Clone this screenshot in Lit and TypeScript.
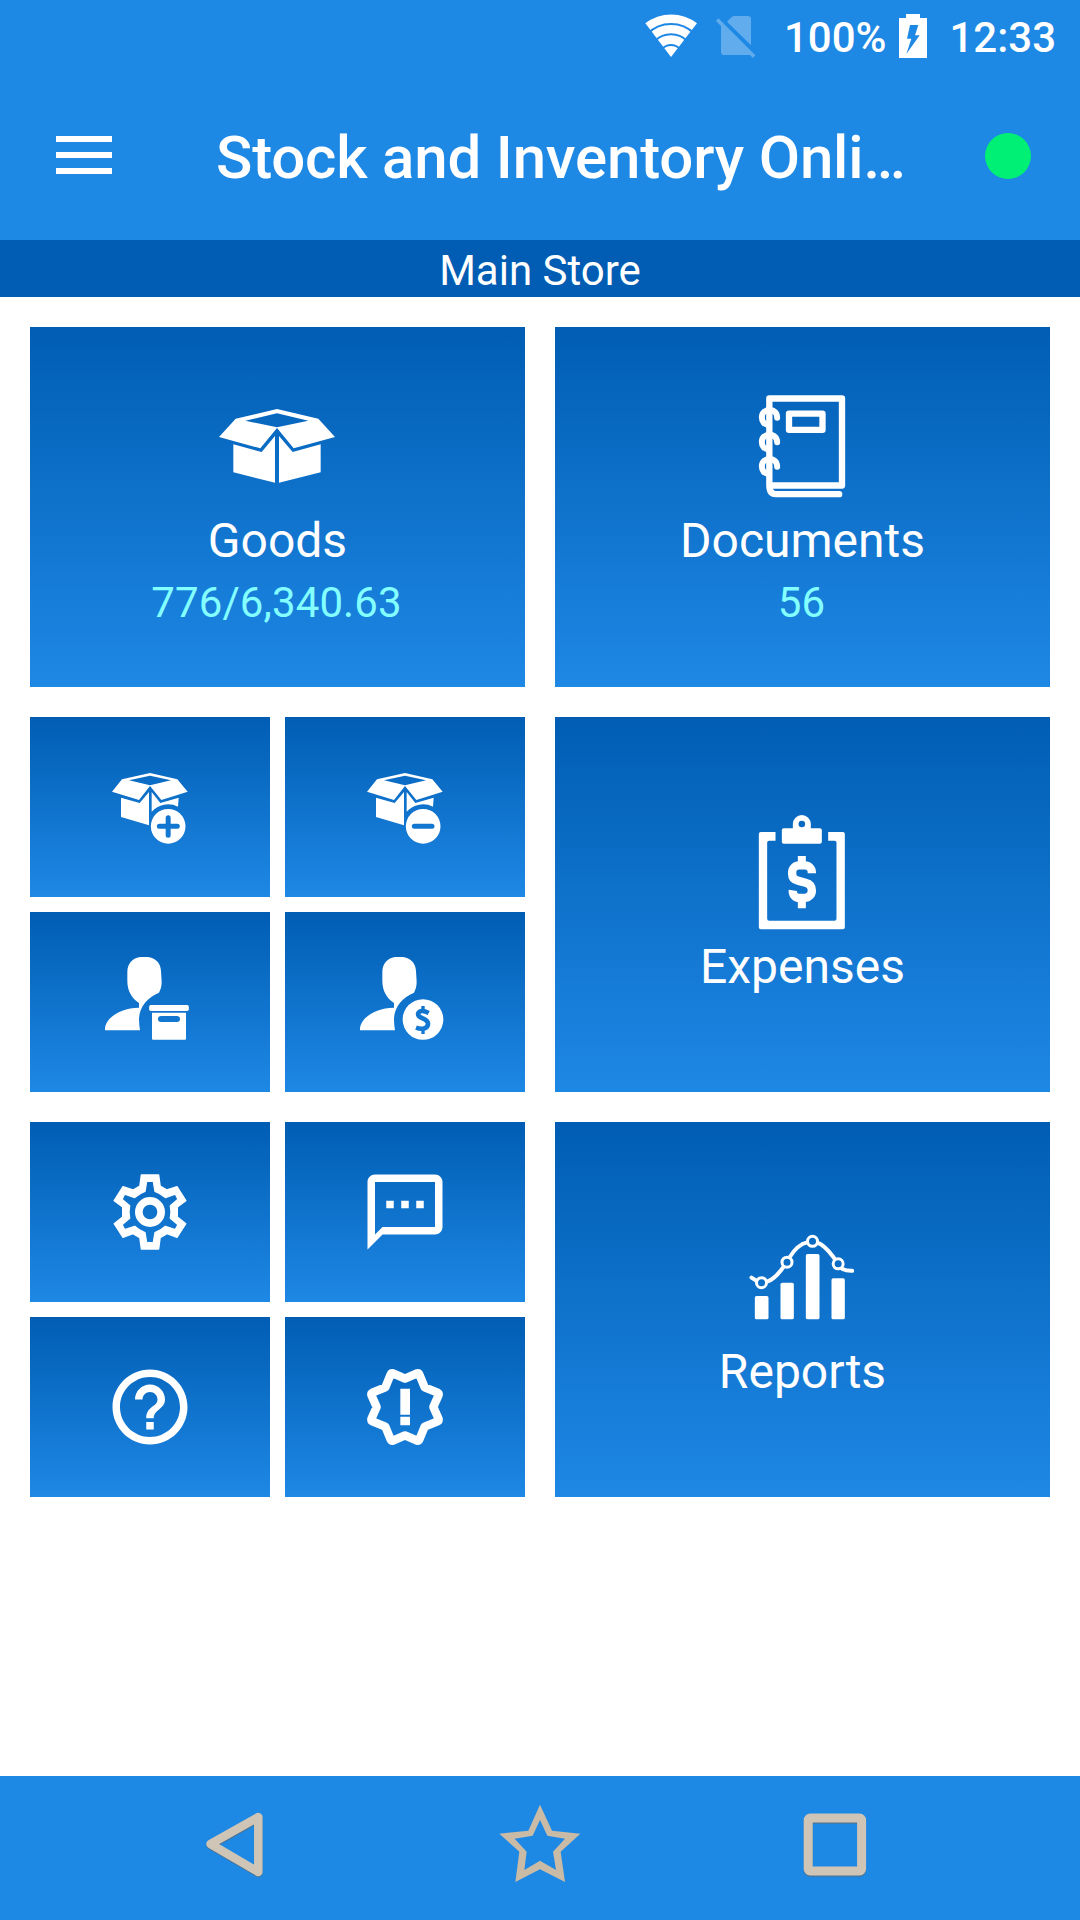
import { LitElement, html, svg, css } from "lit";
import { customElement, property } from "lit/decorators.js";

type Icon = { box: string; art: unknown };

const boxSmall = svg`
  <path fill-rule="evenodd" d="M306 208L390 189L472 208L503 245L424 270L390 228L357 270L276 245ZM327 211L390 226L453 211L390 197Z"/>
  <path d="M303 263L359 279L387 246V346L303 321Z"/>
  <path d="M395 246L421 279L476 263L474 290A67 67 0 0 0 395 305Z"/>`;

const person = svg`
  <path d="M372 170C405 170 422 188 423 213L425 245C425 260 421 270 417 278C382 292 357 322 357 358Q357 375 360 391H255C253 356 298 324 357 323V309C335 295 322 272 322 243V215C323 188 340 170 372 170Z"/>`;

const ICONS: Record<string, Icon> = {
  goods: {
    box: "264 21 360 360",
    art: svg`
      <path fill-rule="evenodd" d="M317 116L441 87L565 116L615 171L491 205L441 144L391 205L267 171ZM346 122L441 142L535 122L441 100Z"/>
      <path d="M310 193L395 216L435 168V308L310 277ZM447 168L488 216L572 193V277L447 308Z"/>`,
  },
  documents: {
    box: "249.5 50 360 360",
    art: svg`
      <g fill="none" stroke="#fff" stroke-width="19" stroke-linejoin="round" stroke-linecap="round">
        <path d="M328.5 345.5H546.5V84.5H328.5V345Q329 371.5 347 371.5H538"/>
        <path d="M387.5 130H488V178.5H387.5Z"/>
        <path stroke-width="18" d="M352 142C352 128 343 119 329 119C315 119 306 128 306 141C306 154 314 163 326 163"/>
        <path stroke-width="18" d="M352 216C352 202 343 193 329 193C315 193 306 202 306 215C306 228 314 237 326 237"/>
        <path stroke-width="18" d="M352 289C352 275 343 266 329 266C315 266 306 275 306 288C306 301 314 310 326 310"/>
      </g>`,
  },
  expenses: {
    box: "189.5 68 360 360",
    art: svg`
      <path d="M287 125H243q-6 0-6 6V411q0 6 6 6H489q6 0 6-6V131q0-6-6-6H445V151H464q6 0 6 6V385q0 6-6 6H268q-6 0-6-6V157q0-6 6-6H287Z"/>
      <rect x="306" y="114" width="120" height="46" rx="6"/>
      <path fill-rule="evenodd" d="M339 118V101a27 27 0 0 1 54 0V118ZM356 101a10 10 0 0 0 20 0a10 10 0 0 0-20 0Z"/>
      <path d="M354 197H378V218H354ZM354 330H378V354H354Z"/>
      <path fill="none" stroke="#fff" stroke-width="25" d="M396 249V246A21 21 0 0 0 375 225H358A21 21 0 0 0 337 246V252C337 263 344 269 354 271L377 277C389 280 396 288 396 300A22 22 0 0 1 374 323H359A20 20 0 0 1 339 300"/>`,
  },
  reports: {
    box: "189.5 24 360 360",
    art: svg`
      <rect x="225" y="258" width="41" height="70" rx="5"/>
      <rect x="302" y="218" width="40" height="110" rx="5"/>
      <rect x="378" y="132" width="41" height="196" rx="5"/>
      <rect x="455" y="205" width="40" height="123" rx="5"/>
      <g fill="none" stroke="#fff" stroke-width="9">
        <circle cx="245" cy="218" r="15"/><circle cx="321.5" cy="156.5" r="15"/>
        <circle cx="398" cy="94" r="15"/><circle cx="475" cy="161.5" r="15"/>
      </g>
      <g fill="none" stroke="#fff" stroke-width="12">
        <path stroke-linecap="round" d="M215 203L229 212M488 177Q499 183 517 182.5"/>
        <path d="M262 215C286 207 298 187 311 171M330 141C344 118 360 102 382 97M413 98C438 108 450 128 465 147"/>
      </g>`,
  },
  boxPlus: {
    box: "255 156 270 270",
    art: svg`${boxSmall}
      <path fill-rule="evenodd" d="M392.5 349a52 52 0 1 0 104 0a52 52 0 1 0-104 0ZM437 323a7.5 7.5 0 0 1 15 0V341.5H472a7.5 7.5 0 0 1 0 15H452V376a7.5 7.5 0 0 1-15 0V356.5H418a7.5 7.5 0 0 1 0-15H437Z"/>`,
  },
  boxMinus: {
    box: "255 156 270 270",
    art: svg`${boxSmall}
      <path fill-rule="evenodd" d="M392.5 349a52 52 0 1 0 104 0a52 52 0 1 0-104 0ZM418 341.5H471a7.5 7.5 0 0 1 0 15H418a7.5 7.5 0 0 1 0-15Z"/>`,
  },
  supplier: {
    box: "255 171 270 270",
    art: svg`${person}
      <rect x="387.5" y="315" width="119" height="18" rx="5"/>
      <path fill-rule="evenodd" d="M396 338H498V416q0 3-3 3H399q-3 0-3-3ZM423 348a9 9 0 0 0 0 18H471a9 9 0 0 0 0-18Z"/>`,
  },
  customer: {
    box: "255 171 270 270",
    art: svg`${person}
      <mask id="coin" maskUnits="userSpaceOnUse" x="370" y="285" width="150" height="150">
        <circle cx="444" cy="358.5" r="61" fill="#fff"/>
        <g fill="none" stroke="#000">
          <path stroke-width="14" d="M461 339Q448 332 440 333C429 335 427 343 432 349C438 356 459 358 459 371C459 387 440 389 423 383"/>
          <path stroke-width="10" d="M444 318V332M444 386V402"/>
        </g>
      </mask>
      <rect x="370" y="285" width="150" height="150" mask="url(#coin)"/>`,
  },
  settings: {
    box: "255 171 270 270",
    art: svg`
      <path fill-rule="evenodd" stroke="#fff" stroke-width="4" stroke-linejoin="round" d="M364 195H416L420.5 228L441 240L471 230L497.5 272L472 291V321L497.5 341L471 382L441 371L420.5 383L416 417H364L359.5 383L339 371L309 382L282.5 341L308 321V291L282.5 272L309 230L339 240L359.5 228ZM380 214L375 244Q358 250 344 262.5L314 252L306 268L329 287Q325 306 329 325L306 344L314 359L344 349Q358 362 375 368L380 398H400L405 368Q422 362 436 349L466 359L474 344L451 325Q455 306 451 287L474 268L466 252L436 262.5Q422 250 405 244L400 214Z"/>
      <circle cx="390" cy="306" r="33.5" fill="none" stroke="#fff" stroke-width="23"/>`,
  },
  messages: {
    box: "0 0 24 24",
    art: svg`<path fill-rule="evenodd" d="M20 2H4c-1.1 0-2 .9-2 2v18l4-4h14c1.1 0 2-.9 2-2V4c0-1.1-.9-2-2-2zm0 14H6l-2 2V4h16v12zM7 9h2v2H7zm4 0h2v2h-2zm4 0h2v2h-2z"/>`,
  },
  help: {
    box: "0 0 24 24",
    art: svg`<path d="M11 18h2v-2h-2v2zm1-16C6.48 2 2 6.48 2 12s4.48 10 10 10 10-4.48 10-10S17.52 2 12 2zm0 18c-4.41 0-8-3.59-8-8s3.59-8 8-8 8 3.59 8 8-3.59 8-8 8zm0-14c-2.21 0-4 1.79-4 4h2c0-1.1.9-2 2-2s2 .9 2 2c0 2-3 1.75-3 5h2c0-2.25 3-2.5 3-5 0-2.21-1.79-4-4-4z"/>`,
  },
  about: {
    box: "1020 156 270 270",
    art: svg`
      <path fill="none" stroke="#fff" stroke-width="25" stroke-linejoin="round" d="M1112 193Q1114 189 1119 190L1155 206L1191 190Q1196 189 1198 193L1214 232L1253 248Q1257 250 1256 255L1240 291L1256 327Q1257 332 1253 334L1214 350L1198 389Q1196 393 1191 392L1155 376L1119 392Q1114 393 1112 389L1096 350L1057 334Q1053 332 1054 327L1070 291L1054 255Q1053 250 1057 248L1096 232Z"/>
      <path d="M1141 236H1170V314.5H1141ZM1141 320H1170V346H1141Z"/>`,
  },
};

@customElement("dash-tile")
class DashTile extends LitElement {
  @property() icon = "";
  @property() label = "";
  @property() value = "";

  static styles = css`
    :host {
      display: flex;
      flex-direction: column;
      align-items: center;
      justify-content: center;
      background: linear-gradient(#005db3, #1e88e5);
      color: #fff;
    }
    .icon {
      display: block;
      width: 90px;
      height: 90px;
      fill: #fff;
    }
    .icon.large {
      width: 120px;
      height: 120px;
    }
    .label {
      margin-top: 4px;
      font-size: 48px;
      line-height: 60px;
    }
    .value {
      margin-top: 6px;
      padding-right: 2px;
      font-size: 42px;
      letter-spacing: 0.12px;
      line-height: 51px;
      color: #84ffff;
    }
  `;

  render() {
    const icon = ICONS[this.icon];
    return html`
      <svg class=${this.label ? "icon large" : "icon"} viewBox=${icon.box}>${icon.art}</svg>
      ${this.label ? html`<div class="label">${this.label}</div>` : null}
      ${this.value ? html`<div class="value">${this.value}</div>` : null}
    `;
  }
}

@customElement("app-root")
class AppRoot extends LitElement {
  static styles = css`
    :host {
      display: flex;
      flex-direction: column;
      height: 1920px;
      background: #fff;
      color: #fff;
      font-family: Roboto, sans-serif;
    }
    .status {
      display: flex;
      align-items: center;
      justify-content: flex-end;
      box-sizing: border-box;
      height: 72px;
      padding-right: 24px;
      background: #1e88e5;
      font-size: 42px;
      font-weight: 500;
      line-height: 72px;
    }
    .text { padding-top: 4px; }
    .wifi { width: 52px; height: 44px; margin-right: 19px; }
    .sim { width: 40px; height: 44px; margin-right: 28px; }
    .battery { width: 28px; height: 44px; margin: 0 22px 0 13px; }
    .bar {
      display: flex;
      align-items: center;
      box-sizing: border-box;
      height: 168px;
      padding: 0 49px 0 56px;
      background: #1e88e5;
    }
    .menu {
      display: flex;
      flex-direction: column;
      gap: 10px;
      margin-bottom: 2px;
    }
    .line { width: 56px; height: 6px; background: #fff; }
    .title {
      flex: 1;
      margin: 0 0 0 104px;
      padding-top: 4px;
      font-size: 60px;
      font-weight: 500;
      letter-spacing: -0.18px;
      line-height: 72px;
      white-space: nowrap;
    }
    .online {
      width: 46px;
      height: 46px;
      border-radius: 50%;
      background: #00f076;
    }
    .store {
      height: 57px;
      background: #005db3;
      font-size: 42px;
      line-height: 62px;
      text-align: center;
    }
    .grid {
      display: grid;
      grid-template-columns: 495px 495px;
      grid-template-rows: 360px 375px 375px;
      gap: 30px;
      padding: 30px;
    }
    .quad {
      display: grid;
      grid-template-columns: 1fr 1fr;
      grid-template-rows: 1fr 1fr;
      gap: 15px;
    }
    .nav {
      display: flex;
      align-items: center;
      justify-content: space-between;
      box-sizing: border-box;
      height: 144px;
      margin-top: auto;
      padding: 0 205px 8px;
      background: #1e88e5;
    }
    .key { width: 82px; height: 82px; }
  `;

  render() {
    return html`
      <div class="status">
        <svg class="wifi" viewBox="79 42 156 132">
          <path fill="#fff" d="M157 171L80 70A127 127 0 0 1 235 70Z"/>
          <g fill="none" stroke="#1e88e5" stroke-width="6">
            <circle cx="157" cy="171" r="99"/><circle cx="157" cy="171" r="68"/><circle cx="157" cy="171" r="36"/>
          </g>
        </svg>
        <svg class="sim" viewBox="292 42 120 132">
          <path fill="#fff" fill-opacity=".3" d="M325 65L338 52Q342 48 348 48H388Q397 48 397 57V136ZM299 55L410 166L403 174L394 165H317Q307 165 307 155V78L292 63Z"/>
        </svg>
        <span class="text">100%</span>
        <svg class="battery" viewBox="837 42 84 132">
          <path fill="#fff" fill-rule="evenodd" d="M837 54H858V42H900V54H921V174H837ZM870 75L861 116H874L859 162L899 106H885L895 75Z"/>
        </svg>
        <span class="text">12:33</span>
      </div>
      <div class="bar">
        <div class="menu">
          <div class="line"></div>
          <div class="line"></div>
          <div class="line"></div>
        </div>
        <div class="title">Stock and Inventory Onli…</div>
        <div class="online"></div>
      </div>
      <div class="store">Main Store</div>
      <div class="grid">
        <dash-tile icon="goods" label="Goods" value="776/6,340.63"></dash-tile>
        <dash-tile icon="documents" label="Documents" value="56"></dash-tile>
        <div class="quad">
          <dash-tile icon="boxPlus"></dash-tile>
          <dash-tile icon="boxMinus"></dash-tile>
          <dash-tile icon="supplier"></dash-tile>
          <dash-tile icon="customer"></dash-tile>
        </div>
        <dash-tile icon="expenses" label="Expenses"></dash-tile>
        <div class="quad">
          <dash-tile icon="settings"></dash-tile>
          <dash-tile icon="messages"></dash-tile>
          <dash-tile icon="help"></dash-tile>
          <dash-tile icon="about"></dash-tile>
        </div>
        <dash-tile icon="reports" label="Reports"></dash-tile>
      </div>
      <div class="nav">
        <svg class="key" viewBox="205 1803 82 82">
          <g fill="none" stroke-width="8.5" stroke-linejoin="round">
            <path stroke="#4d7390" d="M258.3 1818.2V1873L210.5 1845.2Z"/>
            <path stroke="#cfc5b6" d="M258.3 1817V1872L210.5 1844Z"/>
          </g>
        </svg>
        <svg class="key" viewBox="27 39 246 246">
          <path fill="#c9bba6" fill-rule="evenodd" d="M150 44L186 122L271 131L212 185L225 276L150 238L76 276L88 185L28 131L115 122ZM150 90L128 137L74 146L110 185L103 240L150 212L198 240L189 185L225 146L172 137Z"/>
        </svg>
        <svg class="key" viewBox="793 1803 82 82">
          <g fill="none" stroke-width="9" stroke-linejoin="round">
            <rect x="808.2" y="1819.2" width="53.4" height="53" rx="2" stroke="#4d7390"/>
            <rect x="808.2" y="1818" width="53.4" height="53" rx="2" stroke="#cfc5b6"/>
          </g>
        </svg>
      </div>
    `;
  }
}
